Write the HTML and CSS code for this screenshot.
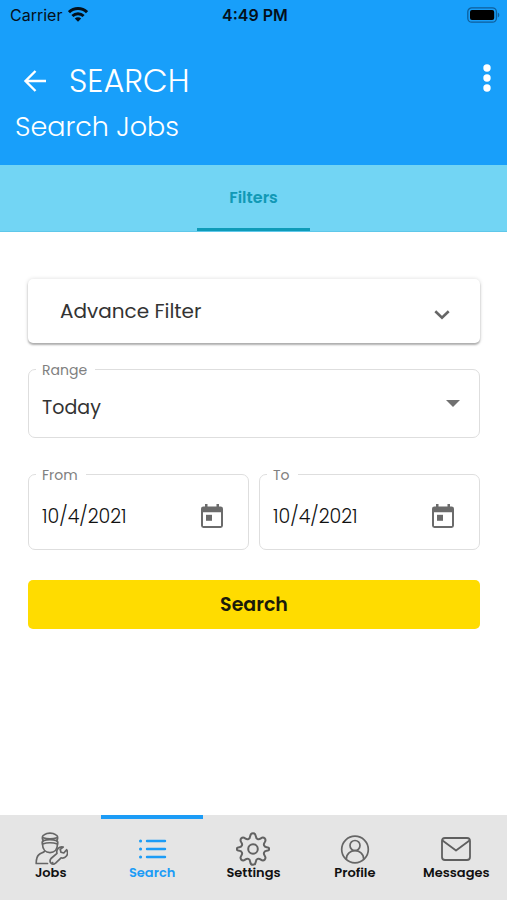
FILE: index.html
```html
<!DOCTYPE html>
<html lang="en">
<head>
<meta charset="utf-8">
<meta name="viewport" content="width=device-width, initial-scale=1">
<title>Search Jobs</title>
<link rel="stylesheet" href="styles.css">
</head>
<body>
<header class="app-header">
  <div class="status-bar">
    <div class="carrier">
      <span>Carrier</span>
      <svg width="20" height="15" viewBox="0 0 20 15" aria-hidden="true">
        <g fill="none" stroke="#04101a" stroke-width="3">
          <path d="M1 5.200a13 13 0 0 1 18 0"/>
          <path d="M4.400 9a8.200 8.200 0 0 1 11.200 0"/>
        </g>
        <path d="M10 14.800 6.800 11.600a4.600 4.600 0 0 1 6.400 0z" fill="#04101a"/>
      </svg>
    </div>
    <span class="clock">4:49 PM</span>
    <svg class="battery" width="34" height="16" viewBox="0 0 34 16" aria-hidden="true">
      <rect x="1.800" y=".8" width="28.600" height="14.400" rx="4" fill="none" stroke="#0f5f9b" stroke-width="1.300"/>
      <rect x="4" y="3" width="24.200" height="10" rx="2" fill="#000"/>
      <path d="M31.800 5.500c2 .8 2 4.200 0 5z" fill="#0f5f9b"/>
    </svg>
  </div>
  <div class="title-row">
    <button class="icon-button" type="button" aria-label="Back">
      <svg width="24" height="24" viewBox="0 0 24 24" fill="none" stroke="#fff" stroke-width="2.400"><path d="M23 12H3M12.500 2 2.500 12l10 10"/></svg>
    </button>
    <h1>SEARCH</h1>
    <button class="icon-button menu-button" type="button" aria-label="More options">
      <svg width="8" height="28" viewBox="0 0 8 28" fill="#fff"><circle cx="4" cy="4" r="3.700"/><circle cx="4" cy="14" r="3.700"/><circle cx="4" cy="24" r="3.700"/></svg>
    </button>
  </div>
  <p class="subtitle">Search Jobs</p>
</header>
<nav class="tabs" aria-label="Sections">
  <a class="tab" href="#filters" aria-current="page">Filters</a>
</nav>
<main id="filters">
  <form class="filters">
    <button class="accordion" type="button" aria-expanded="false">
      <span>Advance Filter</span>
      <svg width="16" height="10" viewBox="0 0 16 10" fill="none" stroke="#666" stroke-width="2.600"><path d="m1.300 1.300 6.700 6.500 6.700-6.500"/></svg>
    </button>
    <fieldset class="field">
      <legend><label for="range">Range</label></legend>
      <div class="control range-control">
        <select id="range"><option>Today</option></select>
        <svg class="caret" width="14" height="7" viewBox="0 0 14 7" fill="#707070" aria-hidden="true"><path d="M0 0h14L7 7z"/></svg>
      </div>
    </fieldset>
    <div class="dates">
      <fieldset class="field">
        <legend><label for="from">From</label></legend>
        <div class="control date-control">
          <input id="from" type="text" value="10/4/2021">
          <button class="icon-button" type="button" aria-label="Choose start date">
            <svg width="22" height="24" viewBox="0 0 22 24" fill="#6b6b6b"><path fill-rule="evenodd" d="M4 0h2.500v2.400h9V0H18v2.400h1.600A2.400 2.400 0 0 1 22 4.800v16.800a2.400 2.400 0 0 1-2.400 2.400H2.400A2.400 2.400 0 0 1 0 21.600V4.800a2.400 2.400 0 0 1 2.400-2.400H4zM2 8.200V22h18V8.200z"/><path d="M5 10.800h6v6H5z"/></svg>
          </button>
        </div>
      </fieldset>
      <fieldset class="field">
        <legend><label for="to">To</label></legend>
        <div class="control date-control">
          <input id="to" type="text" value="10/4/2021">
          <button class="icon-button" type="button" aria-label="Choose end date">
            <svg width="22" height="24" viewBox="0 0 22 24" fill="#6b6b6b"><path fill-rule="evenodd" d="M4 0h2.500v2.400h9V0H18v2.400h1.600A2.400 2.400 0 0 1 22 4.800v16.800a2.400 2.400 0 0 1-2.400 2.400H2.400A2.400 2.400 0 0 1 0 21.600V4.800a2.400 2.400 0 0 1 2.400-2.400H4zM2 8.200V22h18V8.200z"/><path d="M5 10.800h6v6H5z"/></svg>
          </button>
        </div>
      </fieldset>
    </div>
    <button class="submit" type="submit">Search</button>
  </form>
</main>
<nav class="bottom-nav" aria-label="Main">
  <a href="#jobs">
    <svg width="34" height="34" viewBox="0 0 34 34" fill="none" stroke="#666" stroke-width="1.700" stroke-linejoin="round" stroke-linecap="round">
      <path d="M9.300 8.800C7.500 6 8.300 3.300 10.500 2.700c2.600-2.200 8.400-2.200 11 0 2.200.6 3 3.300 1.200 6.100-3.600-1.200-9.800-1.200-13.400 0z"/>
      <path d="M9 5.700c4 1.300 10 1.300 14 0M9.300 8.800c-1.400 1-1.200 2.200-.8 3.200 4.200-1.400 10.800-1.400 15 0 .4-1 .6-2.200-.8-3.200"/>
      <path d="M8.500 12c0 5.800 3.500 8.700 7.500 8.700s7.500-2.900 7.500-8.700"/>
      <path d="M10.500 19.300c-1.500 1.600-3.700 1.800-5.400 3.200C2.500 24.500 2.200 27.500 2.200 31.500h11.300M18.500 30.500h.2"/>
      <path d="M32.600 17.700 29.800 21l-2.800-.8-.8-2.800 3-2.400c-4-1-7.400 2.500-6.200 6.300L17 26.500c-2.600 3.500 1.200 7.200 4.600 4.600l5.500-5.300c4 1.200 8.400-3.200 5.500-8.100z"/>
    </svg>
    <span>Jobs</span>
  </a>
  <a class="active" href="#search" aria-current="page">
    <svg width="34" height="34" viewBox="0 0 34 34" fill="none" stroke="#1c9cf6" stroke-width="2.400" stroke-linecap="round"><path d="M12 9h18M12 17h18M12 25h18"/><path stroke-width="3" d="M5.500 9h.1M5.500 17h.1M5.500 25h.1"/></svg>
    <span>Search</span>
  </a>
  <a href="#settings">
    <svg width="34" height="34" viewBox="0 0 34 34" fill="none" stroke="#626262" stroke-width="2" stroke-linejoin="round">
      <circle cx="17" cy="17" r="4.800"/>
      <path d="M14.200 4.200c.5-4 5.100-4 5.600 0 .3 3.100 2.800 3.800 5 2.200 3-2.300 6 .8 3.900 3.900-1.600 2.200-.8 4.600 2 4.900 3.400.4 3.400 3.200 0 3.600-2.800.3-3.600 2.700-2 4.900 2.100 3.100-.9 6.200-3.900 3.900-2.200-1.600-4.700-.9-5 2.200-.5 4-5.100 4-5.600 0-.3-3.100-2.800-3.800-5-2.200-3 2.300-6-.8-3.900-3.900 1.600-2.200.8-4.600-2-4.900-3.400-.4-3.400-3.200 0-3.600 2.800-.3 3.600-2.700 2-4.900C3.200 7.200 6.200 4.100 9.200 6.400c2.200 1.600 4.700.9 5-2.200z"/>
    </svg>
    <span>Settings</span>
  </a>
  <a href="#profile">
    <svg width="34" height="34" viewBox="0 0 34 34" fill="none" stroke="#666" stroke-width="1.700"><circle cx="17" cy="17.500" r="13.300"/><circle cx="17" cy="13.500" r="5"/><path d="M8.300 27.300c0-11.500 17.400-11.500 17.400 0"/></svg>
    <span>Profile</span>
  </a>
  <a href="#messages">
    <svg width="34" height="34" viewBox="0 0 34 34" fill="none" stroke="#5f5f5f" stroke-width="1.800" stroke-linejoin="round"><rect x="3" y="6" width="28" height="22" rx="3"/><path d="m3.500 8.500 13.500 10 13.500-10"/></svg>
    <span>Messages</span>
  </a>
</nav>
</body>
</html>
```
FILE: styles.css
```css
* {
  box-sizing: border-box;
}

body {
  margin: 0;
  min-height: 100vh;
  display: flex;
  flex-direction: column;
  background: #fff;
  color: #333;
  font-family: Poppins, Inter, sans-serif;
}

button,
input,
select {
  font: inherit;
  color: inherit;
  border: 0;
  padding: 0;
  background: none;
}

svg {
  display: block;
  flex: none;
}

.app-header {
  padding-bottom: 20px;
  background: #189ffa;
  color: #fff;
}

.status-bar {
  display: grid;
  grid-template-columns: 1fr auto 1fr;
  align-items: center;
  height: 29px;
  padding: 0 7px 0 10px;
  color: #04101a;
  font-family: Inter, sans-serif;
  font-size: 16px;
}

.carrier {
  display: flex;
  align-items: center;
  gap: 6px;
}

.clock {
  font-weight: 600;
}

.battery {
  justify-self: end;
}

.title-row {
  display: flex;
  align-items: center;
  height: 80px;
  padding: 24px 16px 0 23px;
}

.title-row h1 {
  margin: 0 auto 0 22px;
  font-size: 32px;
  line-height: 36px;
  font-weight: 300;
}

.icon-button {
  cursor: pointer;
}

.menu-button {
  align-self: flex-start;
  margin-top: 11px;
}

.subtitle {
  margin: 0;
  padding: 0 15px;
  font-size: 27px;
  line-height: 36px;
  font-weight: 300;
}

.tabs {
  display: flex;
  justify-content: center;
  height: 67px;
  background: #72d5f4;
  border-bottom: 1px solid #5fc8ea;
}

.tab {
  padding: 0 32px;
  border-bottom: 3px solid #0e9bb8;
  color: #1199b6;
  font-size: 16px;
  line-height: 66px;
  font-weight: 600;
  text-decoration: none;
}

.filters {
  padding: 47px 27px 32px 28px;
}

.accordion {
  display: flex;
  align-items: center;
  justify-content: space-between;
  width: 100%;
  height: 64px;
  margin-bottom: 17px;
  padding: 0 30px 0 32px;
  border-radius: 5px;
  background: #fff;
  box-shadow: 0 2px 2px rgba(0, 0, 0, .28), 0 0 4px rgba(0, 0, 0, .14);
  font-size: 20px;
}

.accordion svg {
  margin-top: 8px;
}

.field {
  min-width: 0;
  margin: 0;
  padding: 0;
  border: 1px solid #dedede;
  border-radius: 7px;
}

.field legend {
  margin-left: 7px;
  padding: 2px 8px 0 6px;
  color: #808080;
  font-size: 14px;
  line-height: 16px;
}

.control {
  display: flex;
  align-items: center;
  padding-left: 13px;
  font-size: 19px;
}

.range-control {
  display: grid;
  height: 59px;
}

.range-control > * {
  grid-area: 1 / 1;
}

.range-control select {
  appearance: none;
  width: 100%;
  height: 100%;
}

.caret {
  justify-self: end;
  margin: 0 19px 8px 0;
  pointer-events: none;
}

.dates {
  display: grid;
  grid-template-columns: 1fr 1fr;
  gap: 10px;
  margin: 27px 0 30px;
}

.date-control {
  height: 66px;
  padding-right: 25px;
  color: #111;
}

.date-control input {
  flex: 1;
  min-width: 0;
  height: 100%;
  font-weight: 300;
}

.submit {
  width: 100%;
  height: 49px;
  border-radius: 5px;
  background: #ffdc00;
  color: #1a1a0a;
  font-size: 19px;
  font-weight: 600;
}

.bottom-nav {
  display: grid;
  grid-template-columns: repeat(5, 1fr);
  height: 85px;
  margin-top: auto;
  background: #e5e5e5;
}

.bottom-nav a {
  display: flex;
  flex-direction: column;
  align-items: center;
  padding-top: 13px;
  border-top: 4px solid transparent;
  color: #111;
  font-size: 13px;
  line-height: 14px;
  font-weight: 600;
  text-decoration: none;
}

.bottom-nav .active {
  border-color: #1c9cf6;
  color: #1c9cf6;
}
```
